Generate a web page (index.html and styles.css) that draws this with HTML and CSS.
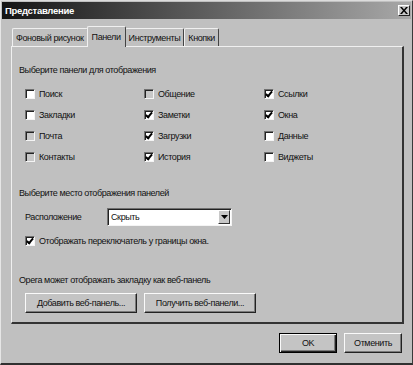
FILE: index.html
```html
<!DOCTYPE html>
<html>
<head>
<meta charset="utf-8">
<link rel="stylesheet" href="styles.css">
</head>
<body>
<div class="window">
  <div class="titlebar">
    <span class="title">Представление</span>
    <span class="close"><svg width="8" height="7" viewBox="0 0 8 7"><path d="M0 0h2l2 2.5L6 0h2L5 3.5 8 7H6L4 4.5 2 7H0l3-3.5z" fill="#000"/></svg></span>
  </div>
  <div class="tabs">
    <div class="tab">Фоновый рисунок</div>
    <div class="tab active">Панели</div>
    <div class="tab">Инструменты</div>
    <div class="tab">Кнопки</div>
  </div>
  <div class="panel">
    <div class="heading">Выберите панели для отображения</div>
    <div class="grid">
      <label class="cb"><span class="box"></span>Поиск</label>
      <label class="cb"><span class="box gray"></span>Общение</label>
      <label class="cb"><span class="box on"></span>Ссылки</label>
      <label class="cb"><span class="box"></span>Закладки</label>
      <label class="cb"><span class="box on"></span>Заметки</label>
      <label class="cb"><span class="box on"></span>Окна</label>
      <label class="cb"><span class="box gray"></span>Почта</label>
      <label class="cb"><span class="box on"></span>Загрузки</label>
      <label class="cb"><span class="box"></span>Данные</label>
      <label class="cb"><span class="box gray"></span>Контакты</label>
      <label class="cb"><span class="box on"></span>История</label>
      <label class="cb"><span class="box"></span>Виджеты</label>
    </div>
    <div class="heading second">Выберите место отображения панелей</div>
    <div class="row">
      <span class="lbl">Расположение</span>
      <div class="select"><span class="val">Скрыть</span><span class="arrow"><svg width="7" height="4" viewBox="0 0 7 4"><path d="M0 0h7L3.5 4z" fill="#000"/></svg></span></div>
    </div>
    <label class="cb single"><span class="box on"></span>Отображать переключатель у границы окна.</label>
    <div class="heading third">Opera может отображать закладку как веб-панель</div>
    <div class="btnrow">
      <div class="btn wide">Добавить веб-панель...</div>
      <div class="btn wide">Получить веб-панели...</div>
    </div>
  </div>
  <div class="footer">
    <div class="btn ok">OK</div>
    <div class="btn">Отменить</div>
  </div>
</div>
</body>
</html>
```
FILE: styles.css
```css
html, body { margin: 0; padding: 0; }
body { width: 413px; height: 365px; overflow: hidden; background: #c0c0c0; }
.window {
  box-sizing: border-box;
  width: 413px; height: 365px;
  background: #c0c0c0;
  border-top: 1px solid #dcdcdc; border-left: 1px solid #e6e6e6;
  border-right: 1px solid #3a3a3a; border-bottom: 2px solid #303030;
  font-family: "Liberation Sans", Arial, sans-serif;
  font-size: 9px;
  letter-spacing: -0.4px;
  color: #111;
  padding: 1px 1px 0 1px;
}
.titlebar {
  height: 17px;
  display: flex; align-items: center; justify-content: space-between;
  background: linear-gradient(to right, #141414 0%, #505050 40%, #a8a8a8 100%);
  padding: 0 1px 0 3px;
}
.title { color: #fff; font-weight: bold; font-size: 9.5px; letter-spacing: -0.3px; }
.close {
  width: 12px; height: 11px; box-sizing: border-box;
  background: #c8c8c8;
  border-top: 1px solid #fff; border-left: 1px solid #fff;
  border-right: 1px solid #222; border-bottom: 1px solid #222;
  display: flex; align-items: center; justify-content: center;
}
.tabs { display: flex; align-items: flex-end; margin: 7px 0 0 10px; height: 20px; }
.tab {
  height: 18px; box-sizing: border-box; padding: 4px 3px 0 3px;
  border-top: 1px solid #f0f0f0; border-left: 1px solid #f0f0f0;
  border-right: 1px solid #444;
  border-radius: 2px 2px 0 0;
  white-space: nowrap;
}
.tab.active {
  padding: 5px 4px 0 4px;
  margin: 0 -1px -1px; position: relative; z-index: 1;
  background: #c0c0c0;
  height: 21px;
}
.panel {
  box-sizing: border-box;
  margin: 0 7px 0 9px;
  height: 278px;
  border-top: 1px solid #f0f0f0; border-left: 1px solid #f0f0f0;
  border-right: 2px solid #333; border-bottom: 2px solid #333;
  padding: 16px 0 0 7px;
}
.heading { height: 14px; line-height: 14px; }
.grid {
  display: grid; grid-template-columns: 119px 120px 120px;
  grid-auto-rows: 21px;
  margin: 6px 0 0 6px;
}
.cb { display: flex; align-items: center; gap: 3px; white-space: nowrap; }
.box {
  width: 10px; height: 10px; box-sizing: border-box;
  background: #fff;
  border-top: 1px solid #707070; border-left: 1px solid #707070;
  border-right: 1px solid #f4f4f4; border-bottom: 1px solid #f4f4f4;
  box-shadow: inset 1px 1px 0 #222;
  position: relative; margin-right: 1px;
}
.box.gray { background: #c8c8c8; }
.box.on::after {
  content: ""; position: absolute; left: 2px; top: 0px;
  width: 2px; height: 5px;
  border-right: 2px solid #000; border-bottom: 2px solid #000;
  transform: rotate(40deg);
}
.second { margin-top: 19px; }
.row { display: flex; align-items: center; margin: 8px 0 0 6px; height: 18px; }
.lbl { width: 82px; }
.select {
  width: 125px; height: 18px; box-sizing: border-box;
  background: #fff;
  border-top: 1px solid #707070; border-left: 1px solid #707070;
  border-right: 1px solid #f4f4f4; border-bottom: 1px solid #f4f4f4;
  box-shadow: inset 1px 1px 0 #222;
  display: flex; align-items: center; justify-content: space-between;
  padding: 0 1px 0 3px;
}
.arrow {
  width: 12px; height: 14px; box-sizing: border-box;
  background: #c8c8c8;
  border-top: 1px solid #fff; border-left: 1px solid #fff;
  border-right: 1px solid #333; border-bottom: 1px solid #333;
  display: flex; align-items: center; justify-content: center;
}
.single { margin: 7px 0 0 6px; height: 16px; }
.third { margin-top: 24px; }
.btnrow { display: flex; gap: 7px; margin: 6px 0 0 6px; }
.btn {
  box-sizing: border-box; height: 20px;
  background: #c4c4c4;
  border-top: 1px solid #fafafa; border-left: 1px solid #fafafa;
  border-right: 1px solid #222; border-bottom: 1px solid #222;
  box-shadow: inset -1px -1px 0 #7a7a7a;
  display: flex; align-items: center; justify-content: center;
  width: 58px; white-space: nowrap;
}
.btn.wide { width: 112px; }
.btn.ok { border: 1px solid #000; box-shadow: inset 1px 1px 0 #fafafa, inset -1px -1px 0 #222, inset -2px -2px 0 #7a7a7a; }
.footer { display: flex; justify-content: flex-end; gap: 7px; margin: 9px 9px 0 0; }
```
